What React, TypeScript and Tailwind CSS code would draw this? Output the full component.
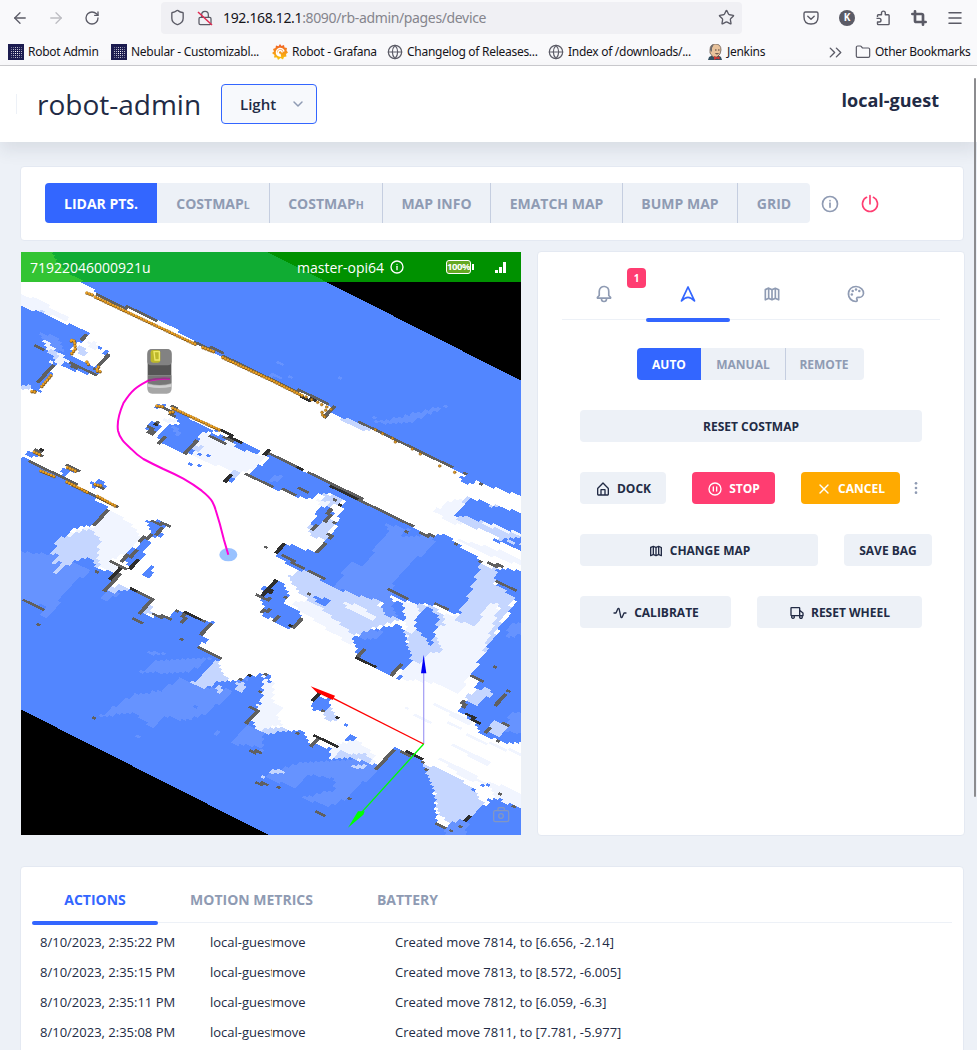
import React from "react";
import {
  ArrowLeft, ArrowRight, RotateCw, Shield, Lock, Star, Menu, Globe, Folder, ChevronsRight, ChevronDown, Crop, X,
} from "lucide-react";

/* ---------- Icons ---------- */
type IconProps = { className?: string };

const Svg = ({ className = "size-5", children }: { className?: string; children: React.ReactNode }) => (
  <svg viewBox="0 0 24 24" fill="currentColor" className={"shrink-0 " + className}>{children}</svg>
);
const InfoIcon = ({ className }: IconProps) => (
  <Svg className={className}>
    <path d="M12 2a10 10 0 1 0 10 10A10 10 0 0 0 12 2zm0 18a8 8 0 1 1 8-8 8 8 0 0 1-8 8z" />
    <circle cx="12" cy="8" r="1" />
    <path d="M12 10a1 1 0 0 0-1 1v5a1 1 0 0 0 2 0v-5a1 1 0 0 0-1-1z" />
  </Svg>
);
const PowerIcon = ({ className }: IconProps) => (
  <Svg className={className}>
    <path d="M12 13a1 1 0 0 0 1-1V2a1 1 0 0 0-2 0v10a1 1 0 0 0 1 1z" />
    <path d="M16.59 3.11a1 1 0 0 0-.92 1.78 8 8 0 1 1-7.34 0 1 1 0 1 0-.92-1.78 10 10 0 1 0 9.18 0z" />
  </Svg>
);
const BellIcon = ({ className }: IconProps) => (
  <Svg className={className}>
    <path d="M20.52 15.21l-1.8-1.81V8.94a6.86 6.86 0 0 0-5.82-6.88 6.74 6.74 0 0 0-7.62 6.67v4.67l-1.8 1.81A1.64 1.64 0 0 0 4.64 18H8v.34A3.84 3.84 0 0 0 12 22a3.84 3.84 0 0 0 4-3.66V18h3.36a1.64 1.64 0 0 0 1.16-2.79zM14 18.34A1.88 1.88 0 0 1 12 20a1.88 1.88 0 0 1-2-1.66V18h4zM5.51 16l1.18-1.18a2 2 0 0 0 .59-1.42V8.73A4.73 4.73 0 0 1 8.9 5.17 4.67 4.67 0 0 1 12.64 4a4.86 4.86 0 0 1 4.08 4.9v4.5a2 2 0 0 0 .58 1.42L18.49 16z" />
  </Svg>
);
const NavigationIcon = ({ className }: IconProps) => (
  <Svg className={className}>
    <path d="M12 3.6L4.2 20.2Q8.500 15.900 12 15.900T19.800 20.200Z" fill="none" stroke="currentColor" strokeWidth="2.100" strokeLinejoin="round" />
  </Svg>
);
const MapIcon = ({ className }: IconProps) => (
  <Svg className={className}>
    <path d="M20.41 5.89l-4-1.8H15.59L12 5.7 8.41 4.09h-.05L8.24 4h-.6l-4 1.8a1 1 0 0 0-.64 1V19a1 1 0 0 0 .46.84A1 1 0 0 0 4 20a1 1 0 0 0 .41-.09L8 18.3l3.59 1.61h.05a.85.85 0 0 0 .72 0h.05L16 18.3l3.59 1.61A1 1 0 0 0 20 20a1 1 0 0 0 .54-.16A1 1 0 0 0 21 19V6.8a1 1 0 0 0-.59-.91zM5 7.44l2-.89v10l-2 .89zm4-.89l2 .89v10l-2-.89zm4 .89l2-.89v10l-2 .89zm6 10l-2-.89v-10l2 .89z" />
  </Svg>
);
const PaletteIcon = ({ className }: IconProps) => (
  <Svg className={className}>
    <path d="M19.54 5.08A10.61 10.61 0 0 0 11.91 2a10 10 0 0 0-.05 20 2.58 2.58 0 0 0 2.53-1.89 2.52 2.52 0 0 0-.57-2.28.5.5 0 0 1 .37-.83h1.65A6.15 6.15 0 0 0 22 11.33a8.48 8.48 0 0 0-2.46-6.25zM15.88 15h-1.65a2.49 2.49 0 0 0-1.87 4.15.49.49 0 0 1 .12.49c-.05.21-.28.34-.59.36a8 8 0 0 1-7.82-9.11A8.1 8.1 0 0 1 11.92 4H12a8.47 8.47 0 0 1 6.1 2.48 6.5 6.5 0 0 1 1.9 4.77A4.17 4.17 0 0 1 15.88 15z" />
    <circle cx="12" cy="6.500" r="1.500" /><circle cx="16" cy="8.500" r="1.500" />
    <circle cx="8" cy="8.500" r="1.500" /><circle cx="7" cy="12.700" r="1.500" />
  </Svg>
);
const HomeIcon = ({ className }: IconProps) => (
  <Svg className={className}>
    <path d="M20.42 10.18L12.71 2.3a1 1 0 0 0-1.42 0l-7.71 7.89A2 2 0 0 0 3 11.62V20a2 2 0 0 0 1.89 2h14.22A2 2 0 0 0 21 20v-8.38a2.07 2.07 0 0 0-.58-1.44zM10 20v-6h4v6zm9 0h-3v-7a1 1 0 0 0-1-1H9a1 1 0 0 0-1 1v7H5v-8.42l7-7.15 7 7.19z" />
  </Svg>
);
const PauseIcon = ({ className }: IconProps) => (
  <Svg className={className}>
    <circle cx="12" cy="12" r="9" fill="none" stroke="currentColor" strokeWidth="2" />
    <rect x="8.500" y="8" width="2" height="8" rx="1" /><rect x="13.500" y="8" width="2" height="8" rx="1" />
  </Svg>
);
const ActivityIcon = ({ className }: IconProps) => (
  <Svg className={className}>
    <path d="M14.33 20h-.21a2 2 0 0 1-1.76-1.58L9.68 6l-2.76 6.4A1 1 0 0 1 6 13H3a1 1 0 0 1 0-2h2.34l2.51-5.79a2 2 0 0 1 3.79.38L14.32 18l2.76-6.38A1 1 0 0 1 18 11h3a1 1 0 0 1 0 2h-2.34l-2.51 5.79A2 2 0 0 1 14.33 20z" />
  </Svg>
);
const CarIcon = ({ className }: IconProps) => (
  <Svg className={className}>
    <path d="M21.6 11.22L17 7.52V5a1.91 1.91 0 0 0-1.81-2H3.79A1.91 1.91 0 0 0 2 5v10a2 2 0 0 0 1.2 1.88 3 3 0 1 0 5.6.12h6.36a3 3 0 1 0 5.64 0h.2a1 1 0 0 0 1-1v-4a1 1 0 0 0-.4-.78zM20 12.48V15h-3v-4.92zM7 18a1 1 0 1 1-1-1 1 1 0 0 1 1 1zm5-3H4V5h11v10zm7 3a1 1 0 1 1-1-1 1 1 0 0 1 1 1z" />
  </Svg>
);
const MoreIcon = ({ className }: IconProps) => (
  <Svg className={className}><circle cx="12" cy="12" r="2" /><circle cx="12" cy="5" r="2" /><circle cx="12" cy="19" r="2" /></Svg>
);
const NebularIcon = () => (
  <svg viewBox="0 0 16 16" className="size-4 shrink-0" shapeRendering="crispEdges">
    <rect width="16" height="16" fill="#1c1c50" />
    {[2, 4, 6, 8, 10, 12].map((x) =>
      [2, 4, 6, 8, 10, 12].map((y) => {
        const d = Math.abs(x - 7) + Math.abs(y - 7);
        return <rect key={x + "-" + y} x={x + 0.5} y={y + 0.5} width="1" height="1" fill="#fff" opacity={d < 3 ? 1 : d < 7 ? 0.7 : 0.4} />;
      })
    )}
  </svg>
);
const GrafanaIcon = () => (
  <svg viewBox="0 0 16 16" className="size-4 shrink-0">
    <defs><linearGradient id="gf" x1="0" y1="0" x2="0" y2="1"><stop offset="0" stopColor="#f05a28" /><stop offset="1" stopColor="#fbca0a" /></linearGradient></defs>
    <path fill="url(#gf)" d="M8 0l1.500 2L12 1l.5 2.500 2.500.5-.5 2.500L16 8.500l-2 1.500.5 2.500-2.500.5L11 15.500 8.500 14 6 16l-1-2.500L2 13.500 2.500 11 0 9l2-1.500L1 5l2.500-1L4 1.500l2.500.8z" />
    <path d="M12 7.500A3.800 3.800 0 1 0 9 12M10.200 8.500a2 2 0 1 0-1.500 2" fill="none" stroke="#fff" strokeWidth="1.500" />
  </svg>
);
const JenkinsIcon = () => (
  <svg viewBox="0 0 16 16" className="size-4 shrink-0">
    <path d="M1 16l1-3 4-2h5l3 2 1 3z" fill="#335061" />
    <path d="M3 6q0-6 5.500-6T14 6l-1 4-3 3H6L3 9z" fill="#e8c29b" stroke="#5a4a42" strokeWidth=".7" />
    <path d="M3 6q0-5 4-5.800L5 4v4z" fill="#6d6b6d" />
    <path d="M8 6h1.500M11 6h1.500M8.500 9.500q1.500.8 3 0" stroke="#3b2f2b" strokeWidth=".9" fill="none" />
    <path d="M7 12l3 1.500 2.500-1.500v3.500L10 14.500 7 16z" fill="#d33833" />
  </svg>
);

/* ---------- Occupancy grid map ---------- */
type Pt = [number, number];
// Grid basis vectors of the tilted map, in units of a third of a pixel.
const A: Pt = [10.5, 5.1];
const B: Pt = [-5.5, 6];
const DET = A[0] * B[1] - A[1] * B[0];
const toGrid = ([x, y]: Pt): Pt => [
  Math.round((x * B[1] - y * B[0]) / DET),
  Math.round((A[0] * y - A[1] * x) / DET),
];
const toXY = (u: number, v: number) => (u * A[0] + v * B[0]).toFixed(1) + " " + (u * A[1] + v * B[1]).toFixed(1);
const parse = (s: string, ox: number, oy: number): Pt[] =>
  s.trim().split(/\s+/).map((t) => {
    const [x, y] = t.split(",").map(Number);
    return [x + ox, y + oy];
  });
// Push points on the outer border past it, so that no staircase shows along the frame.
const bleed = ([x, y]: Pt): Pt => [x <= 2 ? x - 40 : x >= 1498 ? x + 40 : x, y >= 1750 ? y + 40 : y <= 2 ? y - 40 : y];
const walk = (a: Pt, b: Pt): Pt[] => {
  const out: Pt[] = [];
  let [u, v] = a;
  const du = b[0] - u, dv = b[1] - v, su = Math.sign(du), sv = Math.sign(dv);
  const nu = Math.abs(du), nv = Math.abs(dv);
  for (let i = 0, j = 0; i < nu || j < nv; ) {
    if ((i + 0.5) * nv <= (j + 0.5) * nu && i < nu) { u += su; i++; }
    else if (j < nv) { v += sv; j++; }
    else { u += su; i++; }
    out.push([u, v]);
  }
  return out;
};
const region = (s: string, ox: number, oy: number) => {
  const g = parse(s, ox, oy).map(bleed).map(toGrid);
  let d = "M" + toXY(g[0][0], g[0][1]);
  g.forEach((p, i) => {
    walk(p, g[(i + 1) % g.length]).forEach(([u, v]) => { d += "L" + toXY(u, v); });
  });
  return d + "Z";
};
const cells = (s: string, ox: number, oy: number) => {
  const g = parse(s, ox - 3, oy - 5).map(toGrid);
  const all: Pt[] = [g[0]];
  for (let i = 1; i < g.length; i++) all.push(...walk(g[i - 1], g[i]));
  return all.map(([u, v]) => `M${toXY(u, v)}L${toXY(u + 1, v)}L${toXY(u + 1, v + 1)}L${toXY(u, v + 1)}Z`).join("");
};

const BLUE = "#5286ff", MID = "#6693ff", LIGHT = "#c5d6ff", PALE = "#f1f5ff", WHITE = "#ffffff";

type Shapes = { at: Pt; regions: [string, string][]; dark: string[]; deep?: string[] };
const QUADRANTS: Shapes[] = [
  {
    at: [0, 0],
    regions: [
      [BLUE, "70,0 110,35 165,80 205,105 230,125 400,205 530,275 600,318 750,383 925,465 945,490 1050,535 1290,650 1350,680 1400,705 1503,750 1503,0"],
      [PALE, "0,115 60,150 120,185 160,215 70,188 0,158"],
      [BLUE, "0,158 70,190 210,250 190,268 150,315 170,325 215,345 240,350 225,382 145,355 110,335 100,352 80,385 45,425 0,400"],
      [LIGHT, "60,180 75,185 72,194 60,190"],
      [MID, "60,245 110,265 140,300 110,310 70,285"],
      [PALE, "70,265 100,290 115,310 150,330 120,345 90,340 115,325 80,295"],
      [LIGHT, "75,300 105,305 120,325 100,330 75,335 110,318"],
      [WHITE, "165,290 205,262 272,310 243,350 200,335 158,312"],
      [LIGHT, "178,290 195,295 190,320 170,312"],
      [PALE, "205,270 225,275 240,300 210,305"],
      [BLUE, "230,288 243,292 238,300 225,297"],
      [BLUE, "258,303 270,308 262,318 250,312"],
      [LIGHT, "0,400 30,408 20,418 0,410"],
      [BLUE, "38,418 65,418 50,432 35,428"],
      [BLUE, "20,605 38,597 65,610 55,625 20,622"],
      [BLUE, "0,618 20,625 265,768 240,790 215,830 185,830 150,850 120,870 0,870"],
      [PALE, "265,775 300,800 340,830 370,870 100,870 190,840 225,825"],
      [LIGHT, "160,852 200,835 240,860 240,875 110,875"],
      [BLUE, "125,660 150,645 170,658 135,677"],
      [BLUE, "210,697 240,687 258,705 225,715"],
      [BLUE, "398,460 430,462 435,474 410,478"],
      [BLUE, "455,475 545,525 605,545 548,545 535,570 512,610 490,615 420,580 408,560 430,540 445,525 485,520 440,490"],
      [MID, "460,530 480,540 475,560 460,555"],
      [PALE, "420,510 460,500 485,520 450,525"],
      [BLUE, "375,535 400,515 422,528 400,552 382,545"],
      [PALE, "548,545 600,560 700,605 735,620 700,655 660,665 560,640 510,612 530,580"],
      [LIGHT, "520,590 545,580 540,600 520,610"],
      [BLUE, "565,545 625,562 610,580 590,572"],
      [BLUE, "640,575 670,575 725,605 705,615 655,592"],
      [BLUE, "538,606 552,610 545,622 533,616"],
      [BLUE, "565,612 578,614 572,625 562,620"],
      [BLUE, "512,635 545,648 540,656 508,645"],
      [LIGHT, "640,662 662,668 645,695 622,690"],
      [BLUE, "628,682 645,690 635,700 622,695"],
      [BLUE, "685,672 752,612 800,640 800,730 740,705"],
      [BLUE, "385,808 410,808 450,825 430,840 425,860 390,870 360,868 395,840"],
    ],
    dark: [
      "235,133 405,210", "530,275 610,308", "610,315 750,382 920,462", "205,255 190,268", "52,290 72,298", "268,315 240,345",
      "150,340 165,350", "178,352 222,374", "100,350 62,395", "45,602 62,612", "25,635 285,768", "45,425",
      "145,650 170,662", "225,700 245,712", "438,480 462,495", "455,470 470,478", "385,525 400,550", "385,545", "415,520",
      "438,560 418,580", "530,570 495,608", "570,555 612,575", "620,565 640,575", "680,672 755,708", "260,780 220,824",
      "400,815 445,825", "425,835 410,850", "392,850 360,868", "230,355",
    ],
    deep: ["600,540 665,577", "635,680 612,692", "750,605 730,612", "60,600", "405,520"],
  },
  {
    at: [750, 0],
    regions: [
      [WHITE, "190,490 240,515 320,540 430,600 540,655 480,640 300,560 190,510"],
      [LIGHT, "195,490 250,512 310,540 290,545 230,520"],
      [MID, "310,500 330,512 400,500 480,478 540,458 540,470 490,492 430,512 360,525 305,515"],
      [MID, "20,332 45,340 40,350 18,342"],
      [MID, "5,365 35,380 30,388 0,378"],
      [MID, "208,378 220,382 214,390 205,386"],
      [MID, "60,375 72,380 68,388 56,384"],
      [WHITE, "545,655 575,670 590,700 570,690"],
      [BLUE, "0,612 100,662 430,830 490,860 560,880 180,880 190,840 215,790 225,755 195,735 160,728 115,750 60,735 0,712"],
      [MID, "0,685 35,670 30,690 0,705"],
      [LIGHT, "160,725 195,735 215,750 185,790 190,830 160,870 130,860 120,830 155,790"],
      [PALE, "150,745 185,755 170,775 150,770"],
      [BLUE, "160,768 195,770 180,800 150,830 122,825"],
      [WHITE, "190,760 205,765 195,790 180,785"],
      [MID, "345,822 425,838 405,850 390,880 320,880 360,850"],
      [PALE, "560,745 600,743 560,800 600,820 560,830 495,785"],
      [BLUE, "600,743 753,800 753,880 720,880 640,840 552,800 580,775"],
      [LIGHT, "575,770 595,742 605,745 560,790 753,865 753,885 700,870 555,806"],
      [PALE, "640,815 753,862 753,868 650,825"],
      [LIGHT, "665,762 680,766 675,774 662,770"],
      [BLUE, "565,675 600,680 620,700 580,700"],
    ],
    dark: [
      "270,512 540,650", "0,607 100,660", "115,670 430,828", "450,845 485,857", "0,706", "40,718 70,730", "90,718 105,724",
      "198,747", "208,768", "185,782 165,810", "140,822 130,835", "190,815", "170,852 180,865", "408,842", "580,670", "637,700", "190,470 170,500",
    ],
    deep: ["100,440 130,452", "82,650 95,658", "185,705 260,742", "210,762"],
  },
  {
    at: [0, 870],
    regions: [
      [BLUE, "0,-6 125,-6 200,30 250,90 300,100 260,150 330,148 400,180 352,222 445,240 465,205 545,240 585,245 545,285 565,300 530,320 600,358 575,390 600,425 640,430 680,410 750,398 750,885 0,885"],
      [MID, "0,30 120,50 215,95 150,140 75,235 60,225 85,200 0,165"],
      [MID, "240,175 265,145 300,160 260,185"],
      [LIGHT, "120,-10 245,-6 250,30 240,60 232,85 210,55 175,60 130,85 80,125 100,90 135,65 88,75 115,45 90,40"],
      [PALE, "240,-10 360,-10 345,20 320,40 270,60 300,80 285,100 240,80 235,30"],
      [LIGHT, "265,145 300,130 330,145 275,162"],
      [WHITE, "300,90 350,60 420,50 420,150 340,140"],
      [BLUE, "310,55 385,-10 398,-6 360,60 330,80"],
      [BLUE, "370,105 395,75 408,80 385,112"],
      [LIGHT, "350,222 390,190 395,225"],
      [LIGHT, "590,358 605,365 600,395 630,425 590,430 545,455 500,432 535,412"],
      [MID, "375,390 400,365 470,352 575,350 545,378 500,400 420,400 318,405"],
      [MID, "390,335 432,340 420,350 388,345"],
      [MID, "230,530 340,462 430,450 480,412 555,452 625,430 750,400 750,480 620,470 560,520 500,540 430,525 395,562 340,515"],
      [BLUE, "640,430 750,400 750,540 700,560 620,470"],
      [BLUE, "525,492 540,498 530,505 520,500"],
      [LIGHT, "595,440 640,428 680,420 660,460 640,440 600,460"],
      [BLUE, "600,430 640,425 650,440 610,450"],
      [PALE, "712,510 730,440 760,420 760,590 730,585 695,550"],
      [BLUE, "715,440 735,430 722,470 712,500"],
      [MID, "635,610 680,555 725,575 750,600 750,660 710,620 645,615"],
      [MID, "590,572 600,578 590,590 580,585"],
      [MID, "345,583 360,588 352,596 342,592"],
      [LIGHT, "735,700 752,705 740,730 730,722"],
      [BLUE, "720,160 750,140 750,180"],
    ],
    dark: [
      "18,183 62,205", "60,254", "278,65 315,82", "235,97", "345,30 310,65", "370,0", "300,100 258,148", "335,148 400,178 355,220",
      "400,218 445,238", "340,237 368,248", "472,215", "500,218 480,246", "500,216 552,242", "575,255 545,282", "483,297",
      "535,322 603,355", "218,533", "735,402", "670,418", "718,455", "690,500 710,508", "710,522 680,552", "700,633 722,640",
      "715,728 738,735", "715,168 750,180", "735,215 750,205", "738,18",
    ],
    deep: ["300,90 275,120", "355,58 335,82", "330,145 350,155", "500,218 540,236", "695,407", "750,150 735,165"],
  },
  {
    at: [750, 870],
    regions: [
      [BLUE, "12,40 40,10 75,15 150,40 165,5 175,-8 530,-10 560,5 640,65 620,120 600,190 575,228 535,215 500,200 440,190 400,180 355,150 360,185 320,180 250,175 150,118 70,80"],
      [MID, "345,-10 480,-10 490,5 400,100 330,190 250,165 190,140 245,60 270,80"],
      [LIGHT, "55,110 105,92 200,145 250,160 330,180 320,195 390,200 410,240 350,255 250,285 160,215 110,190"],
      [PALE, "100,180 140,195 250,285 240,310 150,250 60,195"],
      [PALE, "225,188 270,195 335,243 295,238 240,210"],
      [WHITE, "30,150 65,140 120,185 60,180"],
      [BLUE, "140,170 178,182 165,200 140,188"],
      [MID, "380,100 360,180 400,200 400,235 350,230 330,200"],
      [BLUE, "385,180 410,205 405,250 380,230 370,195"],
      [BLUE, "-20,140 20,120 50,145 60,170 45,190 95,215 92,240 65,268 30,255 0,230 -20,235"],
      [PALE, "400,180 440,190 510,220 575,228 620,165 690,180 655,290 640,340 600,400 560,460 500,430 380,420 420,370"],
      [LIGHT, "636,70 700,92 672,130 740,170 700,230 660,300 635,350 660,270 690,185 650,195 610,255 600,230 640,170 600,250 560,240 590,190"],
      [LIGHT, "405,250 400,290 440,265 500,290 520,335 480,340 450,370 420,360 410,310"],
      [LIGHT, "430,190 480,200 530,225 515,260 500,255 450,220"],
      [BLUE, "440,240 470,200 505,225 500,270 480,320 470,295 440,270"],
      [BLUE, "250,290 275,275 330,265 400,250 412,300 418,350 425,370 365,410 300,380 250,350 270,325"],
      [MID, "275,275 310,265 340,275 320,295 270,300"],
      [BLUE, "688,85 755,100 755,170 740,180 675,128"],
      [BLUE, "755,160 740,190 700,240 660,300 645,345 605,405 635,425 600,470 565,512 610,545 640,582 700,610 755,600"],
      [MID, "720,520 755,510 755,590 700,570"],
      [MID, "755,240 720,250 700,290 755,270"],
      [LIGHT, "590,470 640,440 665,460 640,485 620,495 600,485"],
      [LIGHT, "680,540 720,560 690,590 650,570"],
      [BLUE, "655,-8 755,45 755,-8"],
      [LIGHT, "690,-10 755,20 755,28 680,-6"],
      [PALE, "545,-5 640,40 755,90 755,75 650,20"],
      [BLUE, "122,500 150,465 188,478 168,505 140,512"],
      [LIGHT, "150,510 180,505 200,545 170,540"],
      [BLUE, "225,545 238,550 230,558 220,554"],
      [BLUE, "240,580 262,590 245,605 228,598"],
      [PALE, "-20,400 5,440 0,480 40,500 20,520 40,560 -20,560"],
      [LIGHT, "-20,565 30,560 60,570 110,580 115,610 -20,600"],
      [BLUE, "-20,585 60,572 100,575 118,612 190,625 170,665 260,640 330,680 375,625 430,645 455,660 480,700 485,740 500,850 545,870 560,890 -20,890"],
      [MID, "-20,710 40,680 100,665 175,665 250,655 330,680 230,770 180,805 100,775 190,745 200,715 110,700 70,745"],
      [BLUE, "-10,600 40,585 30,650 110,650 30,690 -20,700"],
      [PALE, "200,612 260,600 320,650 310,675 240,650 172,665"],
      [LIGHT, "185,655 215,630 250,645 285,640 310,665 290,668 240,655 172,665"],
      [LIGHT, "5,690 45,685 35,700 5,705"],
      [LIGHT, "255,672 290,678 280,685 255,682"],
      [LIGHT, "465,670 500,685 560,712 600,740 655,800 600,830 575,855 545,850 510,825 485,740"],
      [MID, "540,850 600,830 610,850 560,885 520,870"],
      [BLUE, "600,835 640,800 675,780 755,810 755,890 570,890"],
      [PALE, "655,720 755,770 755,810 680,785"],
      [BLUE, "640,728 655,732 650,740 636,736"],
      [BLUE, "610,742 622,748 615,756 605,750"],
      [BLUE, "655,775 700,780 690,795 655,790"],
      [PALE, "520,600 610,640 700,690 620,665"],
      [PALE, "500,530 640,600 755,655 755,665 620,605"],
      [PALE, "470,480 560,520 640,570 560,540"],
      [PALE, "500,650 600,700 650,740 580,710"],
      [PALE, "385,490 440,520 520,570 450,540"],
      [BLUE, "385,405 400,410 392,418 382,414"],
    ],
    dark: [
      "35,48 95,80", "118,97 165,118", "165,8 150,35", "362,148 412,172", "500,195 532,208", "553,10", "635,65", "665,68 690,80",
      "680,125 733,150", "45,168", "30,230 15,242", "92,235 70,258", "0,175", "0,205", "118,160", "392,375 367,402", "280,330 262,345",
      "605,408 635,420", "678,383", "715,452", "705,468 675,497", "585,487 575,500", "650,580 660,565", "685,600", "700,545 715,560",
      "150,455 182,472", "165,515", "145,592 120,618", "372,630 322,688", "395,638 415,642", "140,815 165,828", "237,778", "22,743",
      "497,850 530,862", "575,862", "548,875", "690,760", "735,797", "470,687", "455,668", "80,580",
    ],
    deep: [
      "40,15 15,35", "22,122 0,145", "255,352 308,378", "148,455 128,478", "140,592 200,620", "195,533", "590,525 625,545", "413,638 452,650",
      "602,830 590,845", "65,258",
    ],
  },
];

const LIDAR = [
  "200,128 222,136", "225,140 530,284", "548,292 583,305", "608,322 750,388 850,438", "155,270 150,272 163,272 165,296 150,316", "200,335 206,345",
  "235,350 228,362 240,364", "92,376 60,414", "35,424 50,426", "42,605 62,615", "142,652 172,665", "62,662 105,680",
  "140,695 205,728", "232,738 285,767", "225,703 250,708", "410,467 432,470", "458,474 600,540", "450,487 462,484",
];
const LIDAR_SPARSE: Pt[] = [
  [858, 441], [875, 449], [893, 457], [905, 464], [920, 471], [933, 478], [917, 481], [906, 487], [908, 495], [914, 500],
  [1066, 539], [1088, 551], [1118, 565], [1126, 576], [1177, 597], [1201, 612], [1259, 648], [1304, 667],
];

function RobotMap() {
  return (
    <svg viewBox="3 6 1500 1749" className="block h-[583px] w-[500px]" shapeRendering="crispEdges">
      <rect x="0" y="0" width="1510" height="1760" fill="#fff" />
      {QUADRANTS.map((q, i) => (
        <g key={i}>
          {q.regions.map(([c, s], j) => <path key={j} fill={c} d={region(s, q.at[0], q.at[1])} />)}
        </g>
      ))}
      {QUADRANTS.map((q, i) => (
        <g key={i}>
          <path fill="#606060" d={q.dark.map((s) => cells(s, q.at[0], q.at[1])).join("")} />
          <path fill="#2e2e2e" d={(q.deep ?? []).map((s) => cells(s, q.at[0], q.at[1])).join("")} />
        </g>
      ))}
      <path d="M730 0L1503 392V0Z M0 1377L748 1756H0Z" fill="#000" />
      <g fill="none" strokeLinecap="round" strokeLinejoin="round" shapeRendering="auto">
        {LIDAR.map((p, i) => <polyline key={i} points={p} stroke="#7d5312" strokeWidth="10" strokeDasharray="0 8.5" transform="translate(1 1.5)" />)}
        {LIDAR.map((p, i) => <polyline key={i} points={p} stroke="#eda224" strokeWidth="7.5" strokeDasharray="0 8.5" />)}
        {LIDAR_SPARSE.map(([x, y], i) => <circle key={i} cx={x} cy={y} r="4" fill="#e59b20" stroke="#7d5312" strokeWidth="1.500" />)}
      </g>
      <g shapeRendering="auto">
        <ellipse cx="625" cy="914" rx="27" ry="20" fill="#99c2ff" />
        <path d="M382 312q0-15 15-15h43q15 0 15 15v102q0 17-15 17h-43q-15 0-15-17z" fill="#a6a6a6" />
        <path d="M384 340h69v35h-69z" fill="#555" />
        <path d="M382 312q0-15 15-15h43q15 0 15 15v22q0 12-12 12h-49q-12 0-12-12z" fill="#828282" />
        <path d="M384 376h70v24q-35 10-70 0z" fill="#777" />
        <path d="M384 402q35 9 70 0v8q-35 8-70 0z" fill="#d0d0d0" />
        <rect x="392" y="300" width="29" height="38" rx="7" fill="#bdb82b" />
        <path d="M402 305h16v25h-13z" fill="none" stroke="#eee96a" strokeWidth="4" />
        <path d="M450 387Q420 384 385 392C350 410 335 420 310 460C297 490 290 515 294 542C300 568 315 580 335 598Q350 614 370 627Q400 643 430 657Q460 670 490 686Q520 703 545 722Q570 742 577 755Q584 768 587 780Q600 820 612 870L625 914" fill="none" stroke="#ff00d4" strokeWidth="6" />
        <path d="M384 391q33-8 66-5" fill="none" stroke="#8f3b83" strokeWidth="5" />
        <path d="M1211 1482V1260" stroke="#aaa5f5" strokeWidth="4" />
        <path d="M1211 1214L1219 1270H1203Z" fill="#0000f5" />
        <path d="M1211 1482L940 1345" stroke="#f00" strokeWidth="4" />
        <path d="M872 1309L945 1337L938 1350L890 1327Z" fill="#f00" />
        <path d="M1211 1482L1022 1690" stroke="#0f0" strokeWidth="4" />
        <path d="M984 1733L1014 1684L1034 1684L1030 1694Z" fill="#0f0" />
        <g fill="none" stroke="#8f9bb3" strokeWidth="4" opacity=".8">
          <rect x="1421" y="1682" width="45" height="33" rx="5" />
          <path d="M1434 1682v-6q0-3 3-3h13q3 0 3 3v6" />
          <circle cx="1443" cy="1698" r="7" />
        </g>
      </g>
    </svg>
  );
}

/* ---------- Browser chrome ---------- */
function BrowserChrome() {
  return (
    <div className="h-[66px] border-b border-[#cccccf] bg-[#f9f9fb] font-['Noto_Sans',sans-serif] text-[#15141a]">
      <div className="flex h-[35px] items-center text-[#5b5b66]">
        <ArrowLeft className="ml-[11px] size-[18px]" strokeWidth={1.7} />
        <ArrowRight className="ml-[18px] size-[18px] text-[#bdbdc2]" strokeWidth={1.7} />
        <RotateCw className="ml-[19px] size-4" strokeWidth={2} />
        <div className="ml-[61px] flex h-8 w-[581px] items-center rounded bg-[#f0f0f4]">
          <Shield className="ml-2 size-[17px]" strokeWidth={1.9} />
          <span className="relative ml-[11px] flex">
            <Lock className="size-4" strokeWidth={1.9} />
            <svg viewBox="0 0 16 16" className="absolute inset-0 size-4"><path d="M1 2L15 15" stroke="#e22850" strokeWidth="1.5" /></svg>
          </span>
          <span className="ml-[10px] w-[264px] text-[14px] tracking-[-0.35px] whitespace-nowrap">
            <span className="text-[#15141a]">192.168.12.1</span><span className="text-[#85858d]">:8090/rb-admin/pages/device</span>
          </span>
          <Star className="ml-auto mr-[7px] size-[17px]" strokeWidth={1.9} />
        </div>
        <svg viewBox="0 0 16 16" className="ml-[61px] size-4" fill="none" stroke="currentColor" strokeWidth="1.4">
          <path d="M2.500 2h11Q15 2 15 3.500V7Q15 14 8 14T1 7V3.500Q1 2 2.500 2zM4.800 6.300L8 9.300l3.200-3" strokeLinecap="round" strokeLinejoin="round" />
        </svg>
        <span className="ml-5 flex size-4 items-center justify-center rounded-full bg-[#5b5b66] text-[10px] font-bold text-white">K</span>
        <svg viewBox="0 0 16 16" className="ml-5 size-4" fill="none" stroke="currentColor" strokeWidth="1.4" strokeLinejoin="round">
          <path d="M2.500 7V5.500q0-.8.800-.8H6.500V3a1.900 1.900 0 0 1 3.800 0v1.700h3q.8 0 .8.8v8.300q0 .8-.8.800H3.300q-.8 0-.8-.8V12h1.700a1.700 1.700 0 0 0 0-3.600H1.500" />
        </svg>
        <Crop className="ml-5 size-4" strokeWidth={4} />
        <Menu className="ml-[19px] size-[18px]" strokeWidth={2} />
      </div>
      <div className="flex h-[34px] items-center pl-2 text-[12px] tracking-[-0.28px] whitespace-nowrap">
        <span className="flex w-[103px] items-center gap-1"><NebularIcon />Robot Admin</span>
        <span className="flex w-[161px] items-center gap-1"><NebularIcon />Nebular - Customizabl...</span>
        <span className="flex w-[115px] items-center gap-1"><GrafanaIcon />Robot - Grafana</span>
        <span className="flex w-[161px] items-center gap-1"><Globe className="size-4 shrink-0 text-[#5b5b66]" strokeWidth={1.8} />Changelog of Releases...</span>
        <span className="flex w-[159px] items-center gap-1"><Globe className="size-4 shrink-0 text-[#5b5b66]" strokeWidth={1.8} />Index of /downloads/...</span>
        <span className="flex w-[118px] items-center gap-1"><JenkinsIcon />Jenkins</span>
        <ChevronsRight className="size-[21px] shrink-0 text-[#5b5b66]" strokeWidth={1.6} />
        <span className="ml-[9px] flex items-center gap-1"><Folder className="size-4 shrink-0 text-[#5b5b66]" strokeWidth={1.8} />Other Bookmarks</span>
      </div>
    </div>
  );
}

/* ---------- Page ---------- */
const LAYERS: [string, string, string][] = [
  ["COSTMAP", "L", "w-[112px]"], ["COSTMAP", "H", "w-[113px]"], ["MAP INFO", "", "w-[108px]"],
  ["EMATCH MAP", "", "w-[132px]"], ["BUMP MAP", "", "w-[115px]"], ["GRID", "", "w-[73px]"],
];
const ACTIONS: [string, string][] = [
  ["8/10/2023, 2:35:22 PM", "Created move 7814, to [6.656, -2.14]"],
  ["8/10/2023, 2:35:15 PM", "Created move 7813, to [8.572, -6.005]"],
  ["8/10/2023, 2:35:11 PM", "Created move 7812, to [6.059, -6.3]"],
  ["8/10/2023, 2:35:08 PM", "Created move 7811, to [7.781, -5.977]"],
];
const btn = "flex h-8 items-center justify-center rounded pt-px text-[12px] font-bold whitespace-nowrap";

export default function App() {
  return (
    <div className="relative h-[1050px] w-[977px] overflow-hidden bg-[#edf1f7] font-['Open_Sans',sans-serif] text-[#222b45]">
      <BrowserChrome />
      <header className="flex h-[76px] bg-white shadow-[0_8px_16px_0_rgba(44,51,73,0.1)]">
        <div className="mt-7 ml-4 h-5 w-px bg-[#edf1f7]" />
        <h1 className="mt-[18px] ml-5 w-[184px] text-[28px] leading-[40px] whitespace-nowrap">robot-admin</h1>
        <button className="mt-[18px] flex h-10 w-24 items-center justify-between rounded border border-[#3366ff] bg-[#f7f9fc] pr-[10px] pl-[18px] text-[15px] font-semibold">
          Light<ChevronDown className="size-4 text-[#8f9bb3]" strokeWidth={2.2} />
        </button>
        <div className="mt-[22px] mr-[38px] ml-auto text-[18px] leading-6 font-bold">local-guest</div>
      </header>

      <section className="mt-6 ml-5 flex h-[75px] w-[944px] rounded border border-[#e4e9f2] bg-white pt-4 pl-6">
        <div className="flex h-10 overflow-hidden rounded text-[14px] font-bold">
          <button className="w-[112px] bg-[#3366ff] text-white">LIDAR PTS.</button>
          {LAYERS.map(([name, sub, w], i) => (
            <button key={i} className={`${w} flex items-center justify-center whitespace-nowrap bg-[#edf1f7] text-[#8f9bb3] ${i > 0 ? "border-l border-[#c5cee0]" : ""}`}>
              {name}{sub && <span className="mt-[5px] text-[10.5px]">{sub}</span>}
            </button>
          ))}
        </div>
        <div className="ml-[10px] flex h-10 items-center gap-5">
          <InfoIcon className="mt-px size-5 text-[#8f9bb3]" />
          <PowerIcon className="mt-[2px] size-5 text-[#ff3d71]" />
        </div>
      </section>

      <div className="mt-[10px] ml-5 flex">
        <section className="relative mt-px ml-px h-[583px] w-[500px] overflow-hidden">
          <RobotMap />
          <div className="absolute inset-x-0 top-0 flex h-[30px] items-center bg-[rgba(0,181,0,0.8)] text-[14px] text-white">
            <span className="ml-[9px] w-[267px] whitespace-nowrap">71922046000921u</span>
            <span className="w-[92px] whitespace-nowrap">master-opi64</span>
            <InfoIcon className="size-4" />
            <span className="ml-[41px] flex h-[14px] w-[25px] items-center justify-center rounded-[3px] border border-white bg-[#65a822] text-[9.5px] font-bold tracking-[-0.4px]">100%</span>
            <span className="ml-px h-[6px] w-[2px] bg-white" />
            <svg viewBox="0 0 12 11" className="ml-[21px] h-[11px] w-3" fill="#fff" shapeRendering="crispEdges">
              <path d="M0 8h3v3H0zM4 5h3v6H4zM8 0h3v11H8z" />
            </svg>
          </div>
        </section>

        <section className="ml-4 h-[585px] w-[428px] rounded border border-[#e4e9f2] bg-white">
          <div className="mt-4 ml-6 flex h-[52px] w-[378px] border-b border-[#edf1f7]">
            {[BellIcon, NavigationIcon, MapIcon, PaletteIcon].map((Icon, i) => (
              <div key={i} className={`relative flex h-[52px] w-[84px] justify-center pt-4 ${i === 1 ? "text-[#3366ff]" : "text-[#8f9bb3]"}`}>
                <Icon className="size-5" />
                {i === 0 && <span className="absolute top-0 right-0 flex h-5 w-[19px] items-center justify-center rounded bg-[#ff3d71] pt-px text-[10px] font-bold text-white">1</span>}
                {i === 1 && <span className="absolute -bottom-[2px] left-0 h-1 w-[84px] rounded-sm bg-[#3366ff]" />}
              </div>
            ))}
          </div>
          <div className="mt-7 ml-[99px] flex h-8 w-[227px] overflow-hidden rounded text-[12px] font-bold">
            <button className="w-16 bg-[#3366ff] pt-px text-white">AUTO</button>
            <button className="w-[85px] border-r border-[#c5cee0] bg-[#edf1f7] pt-px text-[#8f9bb3]">MANUAL</button>
            <button className="w-[78px] bg-[#edf1f7] pt-px pr-[2px] text-[#8f9bb3]">REMOTE</button>
          </div>
          <div className="mt-[30px] ml-[42px] flex flex-col gap-[30px]">
            <button className={`${btn} w-[342px] bg-[#edf1f7]`}>RESET COSTMAP</button>
            <div className="flex items-center">
              <button className={`${btn} w-[86px] gap-[6px] bg-[#edf1f7]`}><HomeIcon className="size-4" />DOCK</button>
              <button className={`${btn} ml-[26px] w-[83px] gap-[6px] bg-[#ff3d71] text-white`}><PauseIcon className="size-4" />STOP</button>
              <button className={`${btn} ml-[26px] w-[99px] gap-[6px] bg-[#ffaa00] text-white`}><X className="size-4" strokeWidth={2} />CANCEL</button>
              <MoreIcon className="ml-2 size-4 text-[#8f9bb3]" />
            </div>
            <div className="flex">
              <button className={`${btn} w-[238px] gap-[6px] bg-[#edf1f7]`}><MapIcon className="size-4" />CHANGE MAP</button>
              <button className={`${btn} ml-[26px] w-[88px] bg-[#edf1f7]`}>SAVE BAG</button>
            </div>
            <div className="flex">
              <button className={`${btn} w-[151px] gap-[6px] bg-[#edf1f7]`}><ActivityIcon className="size-4" />CALIBRATE</button>
              <button className={`${btn} ml-[26px] w-[165px] gap-[6px] bg-[#edf1f7]`}><CarIcon className="size-4" />RESET WHEEL</button>
            </div>
          </div>
        </section>
      </div>

      <section className="mt-[30px] ml-5 h-[220px] w-[944px] rounded border border-[#e4e9f2] bg-white">
        <div className="ml-[11px] flex h-[56px] w-[920px] border-b border-[#edf1f7] text-[14px] font-bold text-[#8f9bb3]">
          <div className="relative w-[126px] pt-[22px] text-center text-[#3366ff]">
            ACTIONS
            <span className="absolute -bottom-[3px] left-0 h-1 w-[126px] rounded-sm bg-[#3366ff]" />
          </div>
          <div className="w-[187px] pt-[22px] text-center">MOTION METRICS</div>
          <div className="w-[125px] pt-[22px] text-center">BATTERY</div>
        </div>
        <div className="mt-[5px] ml-[19px] text-[13px]">
          {ACTIONS.map(([time, msg]) => (
            <div key={time} className="flex h-[30px] items-center whitespace-nowrap">
              <span className="w-[170px]">{time}</span>
              <span className="w-[62px] overflow-hidden">local-guest</span>
              <span className="w-[123px]">move</span>
              <span>{msg}</span>
            </div>
          ))}
        </div>
      </section>
      <div className="absolute top-[78px] right-px h-[719px] w-[2px] rounded bg-[#8c8c8f]" />
    </div>
  );
}
